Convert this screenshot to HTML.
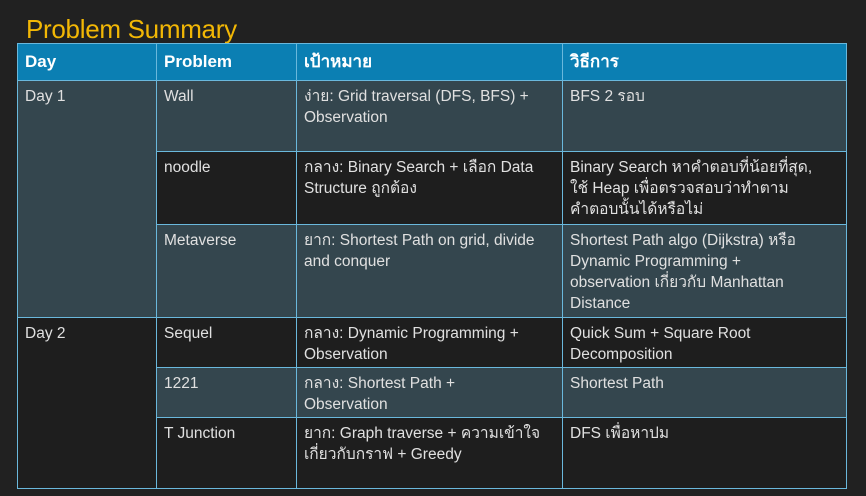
<!DOCTYPE html>
<html><head><meta charset="utf-8"><style>
body{margin:0;width:866px;height:496px;background:#212121;overflow:hidden;font-family:"Liberation Sans","Noto Sans CJK SC",sans-serif;}
.t{position:absolute;left:26px;top:14px;color:#f2b705;font-size:26px;letter-spacing:-0.3px}
.c{position:absolute;box-sizing:border-box;border:1px solid #6ab8dc;color:#e0e0e0;font-size:15.5px;line-height:21px;padding:5px 7px;white-space:nowrap}
.h{background:#0b7fb3;color:#fff;font-weight:bold;font-size:17px;padding-top:7px}
.l{background:#34464e}.d{background:#1e1e1e}
</style></head><body>
<div class="t">Problem Summary</div>
<div class="c h" style="left:17px;top:43px;width:140px;height:38px">Day</div>
<div class="c h" style="left:156px;top:43px;width:141px;height:38px">Problem</div>
<div class="c h" style="left:296px;top:43px;width:267px;height:38px">เป้าหมาย</div>
<div class="c h" style="left:562px;top:43px;width:285px;height:38px">วิธีการ</div>

<div class="c l" style="left:17px;top:80px;width:140px;height:238px">Day 1</div>
<div class="c l" style="left:156px;top:80px;width:141px;height:72px">Wall</div>
<div class="c l" style="left:296px;top:80px;width:267px;height:72px">ง่าย: Grid traversal (DFS, BFS) +<br>Observation</div>
<div class="c l" style="left:562px;top:80px;width:285px;height:72px">BFS 2 รอบ</div>

<div class="c d" style="left:156px;top:151px;width:141px;height:74px">noodle</div>
<div class="c d" style="left:296px;top:151px;width:267px;height:74px">กลาง: Binary Search + เลือก Data<br>Structure ถูกต้อง</div>
<div class="c d" style="left:562px;top:151px;width:285px;height:74px">Binary Search หาคำตอบที่น้อยที่สุด,<br>ใช้ Heap เพื่อตรวจสอบว่าทำตาม<br>คำตอบนั้นได้หรือไม่</div>

<div class="c l" style="left:156px;top:224px;width:141px;height:94px">Metaverse</div>
<div class="c l" style="left:296px;top:224px;width:267px;height:94px">ยาก: Shortest Path on grid, divide<br>and conquer</div>
<div class="c l" style="left:562px;top:224px;width:285px;height:94px">Shortest Path algo (Dijkstra) หรือ<br>Dynamic Programming +<br>observation เกี่ยวกับ Manhattan<br>Distance</div>

<div class="c d" style="left:17px;top:317px;width:140px;height:172px">Day 2</div>
<div class="c d" style="left:156px;top:317px;width:141px;height:51px">Sequel</div>
<div class="c d" style="left:296px;top:317px;width:267px;height:51px">กลาง: Dynamic Programming +<br>Observation</div>
<div class="c d" style="left:562px;top:317px;width:285px;height:51px">Quick Sum + Square Root<br>Decomposition</div>

<div class="c l" style="left:156px;top:367px;width:141px;height:51px">1221</div>
<div class="c l" style="left:296px;top:367px;width:267px;height:51px">กลาง: Shortest Path +<br>Observation</div>
<div class="c l" style="left:562px;top:367px;width:285px;height:51px">Shortest Path</div>

<div class="c d" style="left:156px;top:417px;width:141px;height:72px">T Junction</div>
<div class="c d" style="left:296px;top:417px;width:267px;height:72px">ยาก: Graph traverse + ความเข้าใจ<br>เกี่ยวกับกราฟ + Greedy</div>
<div class="c d" style="left:562px;top:417px;width:285px;height:72px">DFS เพื่อหาปม</div>
</body></html>
